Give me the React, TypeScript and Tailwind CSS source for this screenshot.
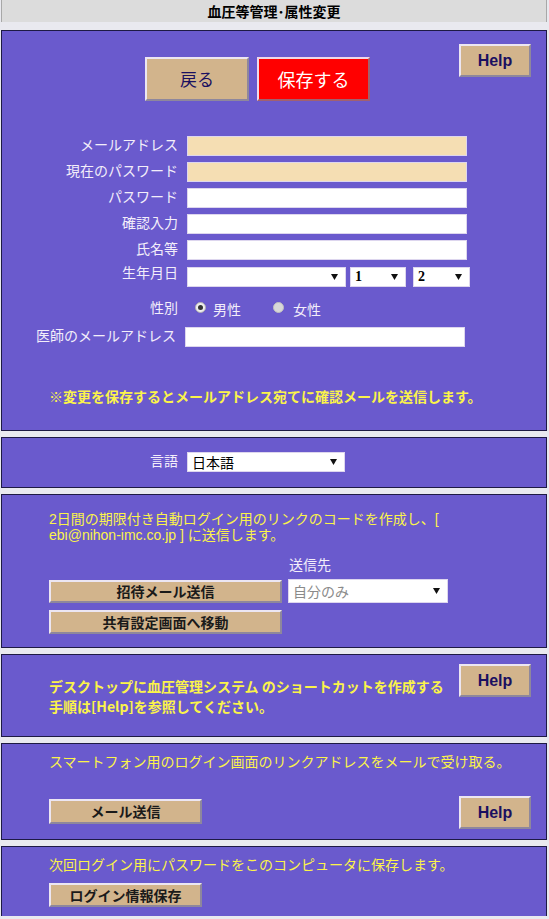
import React from "react";

const jp = { fontFamily: '"Noto Sans CJK JP", "Noto Sans", sans-serif' };
const mixed = { fontFamily: '"Liberation Sans", "Noto Sans CJK JP", sans-serif' };
const btn =
  "bg-[#d2b48c] border-2 border-t-[#ece6f2] border-l-[#ece6f2] border-r-[#8e879c] border-b-[#8e879c] flex items-center justify-center";

function Arrow() {
  return (
    <svg width="7" height="6" viewBox="0 0 7 6" className="shrink-0">
      <polygon points="0,0 7,0 3.5,6" fill="#111" />
    </svg>
  );
}

function Help() {
  return (
    <div className={`${btn} w-[72px] h-[33px] text-[16px] font-bold text-[#1a1060]`} style={{ fontFamily: '"Liberation Sans", Arial, sans-serif' }}>
      Help
    </div>
  );
}

function Label({ children }: { children: React.ReactNode }) {
  return (
    <div className="w-[176px] shrink-0 text-right text-[14px] leading-[16px] text-[#f3eefa]">{children}</div>
  );
}

function Input({ wheat }: { wheat?: boolean }) {
  return (
    <div className={`w-[280px] h-[20px] border border-[#ddd6ee] ${wheat ? "bg-[#f5deb3]" : "bg-white"}`} />
  );
}

function Sel({ w, text, bold, gray }: { w: string; text?: string; bold?: boolean; gray?: boolean }) {
  return (
    <div className={`${w} bg-white border border-[#ddd6ee] flex items-center pl-[4px] pr-[7px]`}>
      <span
        className={`flex-1 text-[14px] leading-[16px] ${bold ? "font-bold text-black" : gray ? "text-[#8a8a8a]" : "text-black"}`}
        style={bold ? { fontFamily: '"Liberation Serif", serif' } : jp}
      >
        {text}
      </span>
      <Arrow />
    </div>
  );
}

function Panel({ h, children, noBottom }: { h: string; children: React.ReactNode; noBottom?: boolean }) {
  return (
    <div className={`ml-[1px] w-[546px] ${h} bg-[#6a5acd] border border-[#1e1a44] ${noBottom ? "border-b-0" : ""}`}>
      {children}
    </div>
  );
}

export default function App() {
  return (
    <div className="w-[549px] h-[919px] bg-[#e9e9ef] overflow-hidden" style={jp}>
      <div className="h-[22px] bg-[#dcdcdc] border-l border-r border-[#a8a8a8] ml-[1px] w-[546px] flex items-center justify-center">
        <span className="text-[14px] font-bold text-black leading-none">血圧等管理･属性変更</span>
      </div>

      <div className="flex flex-col gap-[6px] mt-[8px]">
        {/* Panel 1 */}
        <Panel h="h-[401px]">
          <div className="flex items-start pt-[13px] pr-[15px]">
            <div className="flex gap-[8px] ml-[143px] mt-[13px]">
              <div className={`${btn} w-[104px] h-[44px] text-[17px] text-[#1a1060]`}>戻る</div>
              <div className="w-[113px] h-[44px] bg-[#ff0000] border-2 border-t-[#f0d8e8] border-l-[#f0d8e8] border-r-[#a06070] border-b-[#a06070] flex items-center justify-center text-[18px] text-white">
                保存する
              </div>
            </div>
            <div className="ml-auto">
              <Help />
            </div>
          </div>

          <div className="flex flex-col mt-[35px] gap-[6px]">
            <div className="flex items-start gap-[9px]">
              <Label>メールアドレス</Label>
              <Input wheat />
            </div>
            <div className="flex items-start gap-[9px]">
              <Label>現在のパスワード</Label>
              <Input wheat />
            </div>
            <div className="flex items-start gap-[9px]">
              <Label>パスワード</Label>
              <Input />
            </div>
            <div className="flex items-start gap-[9px]">
              <Label>確認入力</Label>
              <Input />
            </div>
            <div className="flex items-start gap-[9px]">
              <Label>氏名等</Label>
              <Input />
            </div>
            <div className="flex items-start gap-[9px] mt-[1px]">
              <Label>
                <span className="relative top-[-3px]">生年月日</span>
              </Label>
              <div className="flex gap-[4px]">
                <Sel w="w-[159px] h-[20px]" />
                <Sel w="w-[56px] h-[20px]" text="1" bold />
                <div className="ml-[3px]">
                  <Sel w="w-[57px] h-[20px]" text="2" bold />
                </div>
              </div>
            </div>
            <div className="flex items-center gap-[9px] mt-[6px] h-[16px]">
              <Label>性別</Label>
              <div className="flex items-center text-[14px] text-[#f3eefa] ml-[8px]">
                <span className="w-[11px] h-[11px] rounded-full bg-[#eeeeee] border border-[#b0b0b0] flex items-center justify-center">
                  <span className="w-[5px] h-[5px] rounded-full bg-[#333]" />
                </span>
                <span className="ml-[7px] relative top-[2px]">男性</span>
                <span className="ml-[32px] w-[11px] h-[11px] rounded-full bg-[#d8d8d8] border border-[#c0c0c0]" />
                <span className="ml-[9px] relative top-[2px]">女性</span>
              </div>
            </div>
            <div className="flex items-start gap-[7px] mt-[6px]">
              <Label>
                <span className="relative left-[-2px]">医師のメールアドレス</span>
              </Label>
              <Input />
            </div>
          </div>

          <div className="ml-[47px] mt-[41px] text-[14px] font-bold text-[#fbf34a] leading-[16px]">
            ※変更を保存するとメールアドレス宛てに確認メールを送信します。
          </div>
        </Panel>

        {/* Panel 2 */}
        <Panel h="h-[51px]">
          <div className="flex items-start gap-[9px] mt-[14px]">
            <Label>言語</Label>
            <Sel w="w-[158px] h-[20px]" text="日本語" />
          </div>
        </Panel>

        {/* Panel 3 */}
        <Panel h="h-[154px]">
          <div className="ml-[47px] mt-[16px] text-[14px] leading-[16px] text-[#fbf34a]" style={mixed}>
            <div>2日間の期限付き自動ログイン用のリンクのコードを作成し、[</div>
            <div>ebi@nihon-imc.co.jp ] に送信します。</div>
          </div>
          <div className="ml-[47px] mt-[13px] flex gap-[6px]">
            <div className="flex flex-col gap-[7px] pt-[24px]">
              <div className={`${btn} w-[233px] h-[23px] text-[14px] font-bold text-[#1a1a1a]`}>招待メール送信</div>
              <div className={`${btn} w-[233px] h-[24px] text-[14px] font-bold text-[#1a1a1a]`}>共有設定画面へ移動</div>
            </div>
            <div className="flex flex-col">
              <div className="text-[14px] leading-[16px] text-[#f3eefa] ml-[1px]">送信先</div>
              <div className="mt-[7px]">
                <Sel w="w-[160px] h-[24px]" text="自分のみ" gray />
              </div>
            </div>
          </div>
        </Panel>

        {/* Panel 4 */}
        <Panel h="h-[83px]">
          <div className="flex items-start pr-[15px] pt-[9px]">
            <div className="ml-[47px] mt-[12px] text-[14px] font-bold leading-[20px] text-[#fbf34a]">
              <div>デスクトップに血圧管理システム のショートカットを作成する</div>
              <div>手順は[Help]を参照してください。</div>
            </div>
            <div className="ml-auto">
              <Help />
            </div>
          </div>
        </Panel>

        {/* Panel 5 */}
        <Panel h="h-[97px]">
          <div className="ml-[47px] mt-[9px] text-[14px] leading-[16px] text-[#fbf34a]">
            スマートフォン用のログイン画面のリンクアドレスをメールで受け取る。
          </div>
          <div className="flex items-end pr-[15px] mt-[27px]">
            <div className={`${btn} ml-[47px] mb-[5px] w-[153px] h-[25px] text-[14px] font-bold text-[#1a1a1a]`}>メール送信</div>
            <div className="ml-auto">
              <Help />
            </div>
          </div>
        </Panel>

        {/* Panel 6 */}
        <Panel h="h-[70px]" noBottom>
          <div className="ml-[47px] mt-[9px] text-[14px] leading-[16px] text-[#fbf34a]">
            次回ログイン用にパスワードをこのコンピュータに保存します。
          </div>
          <div className={`${btn} ml-[47px] mt-[11px] w-[153px] h-[24px] text-[14px] font-bold text-[#1a1a1a]`}>ログイン情報保存</div>
        </Panel>
      </div>
    </div>
  );
}
